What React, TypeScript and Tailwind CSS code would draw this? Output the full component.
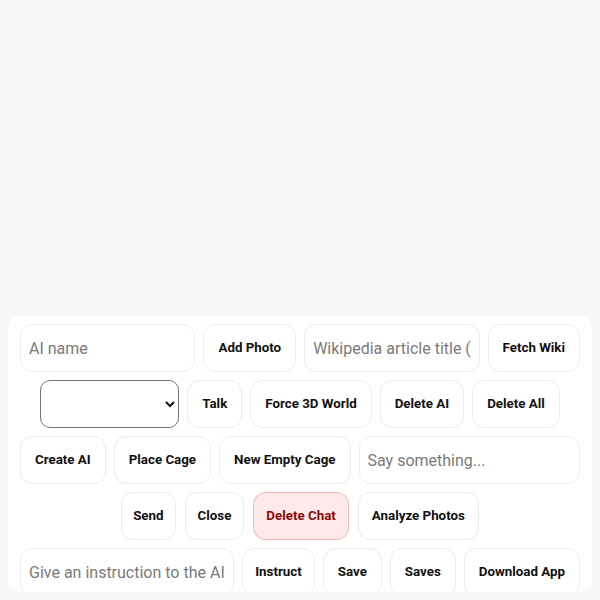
import React from "react";

const btn =
  "h-12 shrink-0 rounded-xl border border-[#ececec] bg-white text-[13.333px] font-bold text-[#111111] whitespace-nowrap";
const field =
  "h-12 min-w-0 flex-1 rounded-xl border border-[#ececec] bg-white px-2 text-base text-[#111111] placeholder:text-[#7a7a7a] outline-none";

function Button({ label, pad = "px-3.5" }: { label: string; pad?: string }) {
  return <button className={`${btn} ${pad}`}>{label}</button>;
}

export default function App() {
  return (
    <div
      className="relative h-[600px] w-full bg-[#f7f7f5]"
      style={{ fontFamily: "Roboto, 'Liberation Sans', sans-serif" }}
    >
      <div className="absolute bottom-2 left-2 right-2 h-[276px] overflow-hidden rounded-xl bg-white px-3 pt-2">
        <div className="flex flex-col gap-2">
          <div className="flex justify-center gap-2">
            <input className={field} placeholder="AI name" />
            <Button label="Add Photo" />
            <input className={field} placeholder="Wikipedia article title (e.g. Cat)" />
            <Button label="Fetch Wiki" />
          </div>
          <div className="flex justify-center gap-2">
            <select className="h-12 w-[139px] rounded-[10px] border border-[#767676] bg-white px-2 text-base text-[#111111]">
              <option value=""></option>
            </select>
            <Button label="Talk" />
            <Button label="Force 3D World" />
            <Button label="Delete AI" />
            <Button label="Delete All" />
          </div>
          <div className="flex justify-center gap-2">
            <Button label="Create AI" />
            <Button label="Place Cage" />
            <Button label="New Empty Cage" />
            <input className={field} placeholder="Say something..." />
          </div>
          <div className="flex justify-center gap-[9px]">
            <Button label="Send" pad="px-[11px]" />
            <Button label="Close" pad="px-3" />
            <button className="h-12 shrink-0 rounded-xl border border-[#f3b8b8] bg-[#fde9e9] px-3 text-[13.333px] font-bold text-[#8b0a0a] whitespace-nowrap">
              Delete Chat
            </button>
            <Button label="Analyze Photos" pad="px-[13px]" />
          </div>
          <div className="flex justify-center gap-2">
            <input className={field} placeholder="Give an instruction to the AI" />
            <Button label="Instruct" pad="px-3" />
            <Button label="Save" />
            <Button label="Saves" />
            <Button label="Download App" />
          </div>
        </div>
      </div>
    </div>
  );
}
